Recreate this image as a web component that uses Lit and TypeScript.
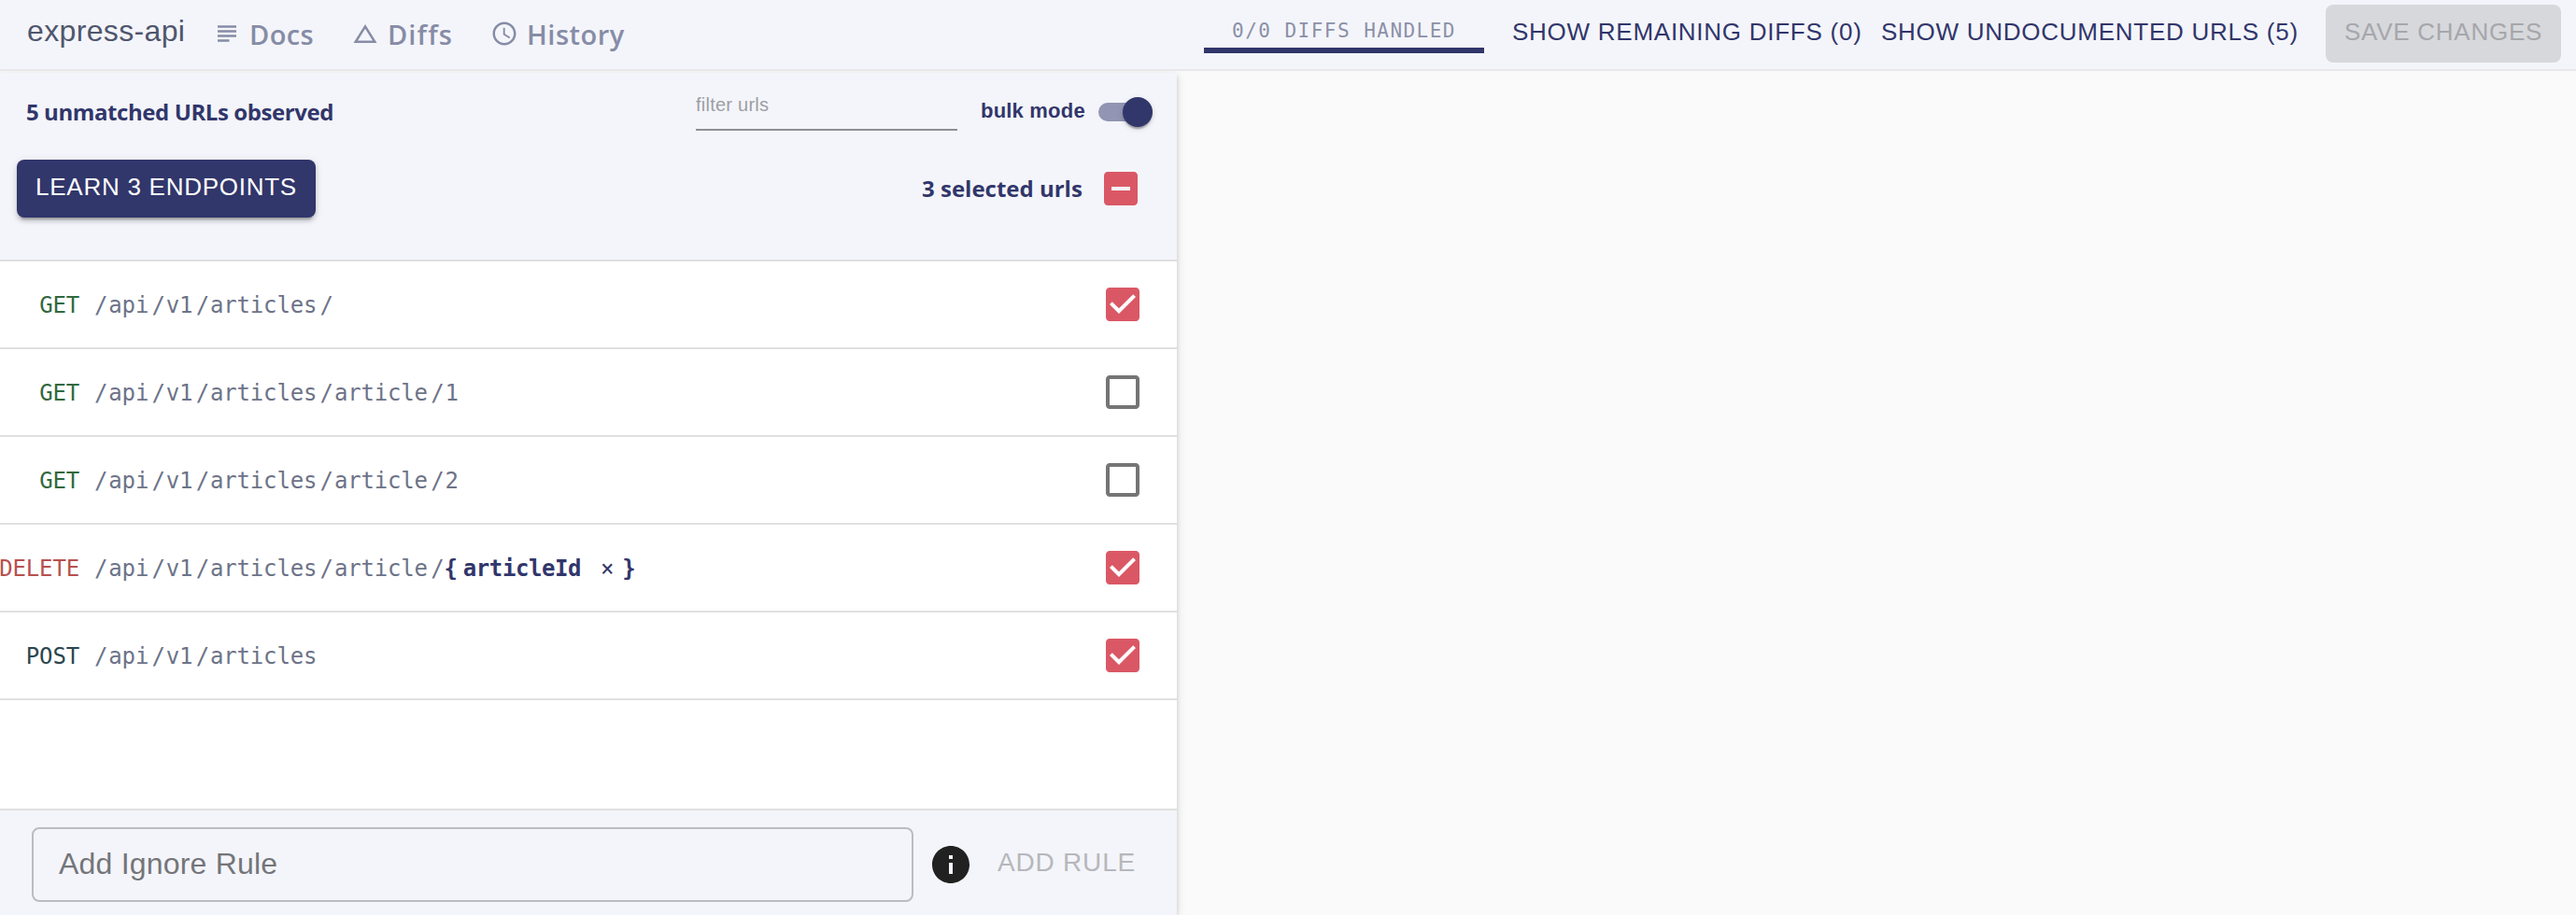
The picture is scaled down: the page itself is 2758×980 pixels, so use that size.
import { LitElement, html, css, svg } from "lit";
import { customElement } from "lit/decorators.js";

const rows = [
  { method: "GET", parts: ["api", "v1", "articles", ""], checked: true },
  { method: "GET", parts: ["api", "v1", "articles", "article", "1"], checked: false },
  { method: "GET", parts: ["api", "v1", "articles", "article", "2"], checked: false },
  { method: "DELETE", parts: ["api", "v1", "articles", "article"], param: "articleId", checked: true },
  { method: "POST", parts: ["api", "v1", "articles"], checked: true },
];

const icons = {
  subject: svg`<path d="M14 17H4v2h10v-2zm6-8H4v2h16V9zM4 15h16v-2H4v2zM4 5v2h16V5H4z"/>`,
  triangle: svg`<path d="M12 7.77L18.39 18H5.61L12 7.77M12 4L2 20h20L12 4z"/>`,
  clock: svg`<path d="M11.99 2C6.47 2 2 6.48 2 12s4.47 10 9.99 10C17.52 22 22 17.52 22 12S17.52 2 11.99 2zM12 20c-4.42 0-8-3.58-8-8s3.58-8 8-8 8 3.58 8 8-3.58 8-8 8z"/><path d="M12.5 7H11v6l5.25 3.15.75-1.23-4.5-2.67z"/>`,
  checked: svg`<path d="M19 3H5c-1.11 0-2 .9-2 2v14c0 1.1.89 2 2 2h14c1.11 0 2-.9 2-2V5c0-1.1-.89-2-2-2zm-9 14l-5-5 1.41-1.41L10 14.17l7.59-7.59L19 8l-9 9z"/>`,
  blank: svg`<path d="M19 5v14H5V5h14m0-2H5c-1.1 0-2 .9-2 2v14c0 1.1.9 2 2 2h14c1.1 0 2-.9 2-2V5c0-1.1-.9-2-2-2z"/>`,
  partial: svg`<path d="M19 3H5c-1.1 0-2 .9-2 2v14c0 1.1.9 2 2 2h14c1.1 0 2-.9 2-2V5c0-1.1-.9-2-2-2zm-2 10H7v-2h10v2z"/>`,
  info: svg`<path d="M12 2C6.48 2 2 6.48 2 12s4.48 10 10 10 10-4.48 10-10S17.52 2 12 2zm1 15h-2v-6h2v6zm0-8h-2V7h2v2z"/>`,
};

const icon = (name: keyof typeof icons, cls: string) =>
  html`<svg class="icon ${cls}" viewBox="0 0 24 24">${icons[name]}</svg>`;

@customElement("app-root")
export class AppRoot extends LitElement {
  static styles = css`
    :host { display: block; height: 980px; overflow: hidden; background: #fafafa;
      font-family: "Liberation Sans", Arial, sans-serif; color: #31366b; white-space: nowrap; }
    * { box-sizing: border-box; }
    .icon { display: block; fill: currentColor; flex: none; }
    .page { display: flex; flex-direction: column; height: 980px; }
    header { display: flex; position: relative; z-index: 1; height: 76px; flex: none; background: #f4f5fa;
      border-bottom: 2px solid #e8e8ea; }
    .brand { width: 228px; padding: 13px 0 0 29px; font-size: 32px; line-height: 40px; letter-spacing: .35px; color: #4f566d; }
    nav { display: flex; align-items: center; height: 72px; width: 1061px; color: #868ca6;
      font: 600 29px "Open Sans", sans-serif; }
    .nav-item { display: flex; align-items: center; gap: 9px; }
    .docs { width: 148px; letter-spacing: .4px; }
    .diffs { width: 149px; letter-spacing: 1.1px; }
    .history { letter-spacing: .5px; }
    .nav-icon { width: 30px; height: 30px; }
    .progress { width: 300px; height: 57px; border-bottom: 6px solid #31366b; text-align: center;
      padding-top: 19px; font: 21px/28px "DejaVu Sans Mono", monospace; letter-spacing: 1.47px; color: #8b90a8; }
    .actions { display: flex; padding-top: 5px; font-size: 26px; line-height: 58px; letter-spacing: .74px; }
    .remaining { margin-left: 30px; width: 395px; }
    .undocumented { width: 476px; }
    .save { width: 252px; height: 62px; border-radius: 8px; background: #d7d8dc; color: #a6a7ab; text-align: center; }
    aside { width: 1260px; margin-top: 2px; flex: 1; display: flex; flex-direction: column; background: #fff;
      box-shadow: 0 6px 2px -4px rgba(0,0,0,.2), 0 4px 4px rgba(0,0,0,.14), 0 2px 10px rgba(0,0,0,.12); }
    .tools { height: 202px; flex: none; background: #f4f5fa; border-bottom: 2px solid #e0e0e0; }
    .line { display: flex; }
    .first { height: 93px; align-items: flex-start; }
    .count { width: 745px; padding: 25px 0 0 28px; font: 700 24px/34px "Open Sans", sans-serif; letter-spacing: -.42px; }
    .filter { width: 280px; height: 62px; padding-top: 20px; border-bottom: 2px solid #8e8f94;
      font-size: 20px; line-height: 28px; letter-spacing: .25px; color: #9d9ea2; }
    .bulk { margin: 27px 0 0 25px; width: 126px; font-weight: 700; font-size: 22px; line-height: 28px; letter-spacing: .2px; }
    .switch { width: 58px; height: 32px; margin-top: 26px; display: grid; align-items: center; }
    .track { grid-area: 1/1; width: 52px; height: 20px; border-radius: 10px; background: #9295b3; }
    .thumb { grid-area: 1/1; justify-self: end; width: 32px; height: 32px; border-radius: 50%; background: #31366b;
      box-shadow: 0 4px 2px -2px rgba(0,0,0,.2), 0 2px 2px rgba(0,0,0,.14), 0 2px 6px rgba(0,0,0,.12); }
    .second { padding-left: 18px; }
    .learn { width: 320px; height: 62px; border-radius: 8px; background: #31366b; color: #fff; text-align: center;
      font-size: 26px; line-height: 58px; letter-spacing: .74px;
      box-shadow: 0 6px 2px -4px rgba(0,0,0,.2), 0 4px 4px rgba(0,0,0,.14), 0 2px 10px rgba(0,0,0,.12); }
    .selected { margin-left: 649px; width: 189px; padding-top: 14px; font: 700 24px/34px "Open Sans", sans-serif; }
    .box { width: 48px; height: 48px; }
    .partial { margin-top: 7px; }
    .on { color: #da5865; }
    .off { color: #757575; }
    .row { display: flex; align-items: center; height: 94px; flex: none; border-bottom: 2px solid #e0e0e0; padding-right: 34px;
      font: 24px/32px "DejaVu Sans Mono", monospace; letter-spacing: -.16px; color: #6d7388; }
    .method { width: 85px; display: flex; justify-content: flex-end; padding-top: 2px; }
    .get { color: #31693f; }
    .delete { color: #b6514d; }
    .post { color: #2b454e; }
    .path { display: flex; flex: 1; padding: 2px 0 0 16px; }
    .slash { margin-right: 1px; }
    .seg { margin-right: 3.3px; }
    .param { display: flex; font-weight: 700; color: #31366b; }
    .name { margin: 0 21px 0 6px; letter-spacing: -.42px; }
    .close { font-weight: 400; margin-right: 9px; }
    footer { margin-top: auto; height: 114px; flex: none; display: flex; background: #f4f5fa; border-top: 2px solid #e0e0e0;
      padding: 18px 0 0 34px; }
    .rule { width: 944px; height: 80px; border: 2px solid #bbbcc1; border-radius: 8px; padding-left: 27px;
      font-size: 32px; line-height: 74px; letter-spacing: .2px; color: #747579; }
    .info { width: 48px; height: 48px; margin: 16px 0 0 16px; color: #212121; }
    .add { margin-left: 26px; font-size: 28px; line-height: 76px; letter-spacing: .8px; color: #b6b7bb; }
  `;

  render() {
    return html`<div class="page">
      <header>
        <div class="brand">express-api</div>
        <nav>
          <div class="nav-item docs">${icon("subject", "nav-icon")}<span>Docs</span></div>
          <div class="nav-item diffs">${icon("triangle", "nav-icon")}<span>Diffs</span></div>
          <div class="nav-item history">${icon("clock", "nav-icon")}<span>History</span></div>
        </nav>
        <div class="progress">0/0 DIFFS HANDLED</div>
        <div class="actions">
          <div class="remaining">SHOW REMAINING DIFFS (0)</div>
          <div class="undocumented">SHOW UNDOCUMENTED URLS (5)</div>
          <div class="save">SAVE CHANGES</div>
        </div>
      </header>
      <aside>
        <div class="tools">
          <div class="line first">
            <div class="count">5 unmatched URLs observed</div>
            <div class="filter">filter urls</div>
            <div class="bulk">bulk mode</div>
            <div class="switch"><div class="track"></div><div class="thumb"></div></div>
          </div>
          <div class="line second">
            <div class="learn">LEARN 3 ENDPOINTS</div>
            <div class="selected">3 selected urls</div>
            ${icon("partial", "box partial on")}
          </div>
        </div>
        ${rows.map((r) => html`<div class="row">
          <div class="method ${r.method.toLowerCase()}">${r.method}</div>
          <div class="path">
            ${r.parts.map((p) => html`<span class="slash">/</span><span class="seg">${p}</span>`)}
            ${r.param ? html`<span>/</span><span class="param"><span>{</span><span class="name">${r.param}</span><span class="close">×</span><span>}</span></span>` : ""}
          </div>
          ${r.checked ? icon("checked", "box on") : icon("blank", "box off")}
        </div>`)}
        <footer>
          <div class="rule">Add Ignore Rule</div>
          ${icon("info", "info")}
          <div class="add">ADD RULE</div>
        </footer>
      </aside>
    </div>`;
  }
}
